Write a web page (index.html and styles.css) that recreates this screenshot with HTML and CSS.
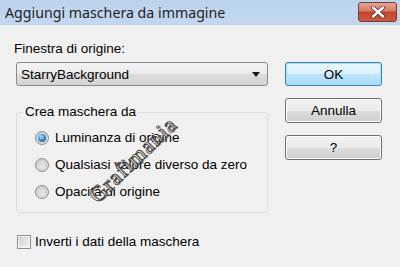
FILE: index.html
```html
<!DOCTYPE html>
<html lang="it">
<head>
    <meta charset="UTF-8">
    <title>Aggiungi maschera da immagine</title>
    <link rel="stylesheet" href="styles.css">
</head>
<body>
<div class="window">
    <div class="titlebar">
        <span class="title">Aggiungi maschera da immagine</span>
        <span class="close">
            <svg width="20" height="12" viewBox="0 0 20 12">
                <path d="M5 1.5 L15 10.5 M15 1.5 L5 10.5" stroke="#5a2a22" stroke-width="4" stroke-linecap="round"/>
                <path d="M5 1.5 L15 10.5 M15 1.5 L5 10.5" stroke="#fff" stroke-width="2.4" stroke-linecap="round"/>
            </svg>
        </span>
    </div>
    <div class="content">
        <div class="main_left">
            <p class="label">Finestra di origine:</p>
            <div class="select">
                <span>StarryBackground</span>
                <span class="arrow"></span>
            </div>
            <fieldset class="group">
                <legend>Crea maschera da</legend>
                <div class="option"><span class="radio checked"></span>Luminanza di origine</div>
                <div class="option"><span class="radio"></span>Qualsiasi valore diverso da zero</div>
                <div class="option"><span class="radio"></span>Opacità di origine</div>
            </fieldset>
            <div class="option check_row"><span class="checkbox"></span>Inverti i dati della maschera</div>
        </div>
        <div class="main_right">
            <div class="btn default">OK</div>
            <div class="btn">Annulla</div>
            <div class="btn">?</div>
        </div>
    </div>
    <div class="watermark">Grafimania</div>
</div>
</body>
</html>
```

FILE: styles.css
```css
*{margin: 0;padding: 0;box-sizing: border-box}
body{
    width: 400px;
    height: 267px;
    overflow: hidden;
    background: #f0f0f0;
    font-family: "Liberation Sans", Arial, sans-serif;
    font-size: 13.5px;
    color: #000;
}
.window{
    position: relative;
    width: 400px;
    height: 267px;
}
.titlebar{
    height: 25px;
    background: linear-gradient(#bcd3ec, #c3d8ef);
    display: flex;
    align-items: center;
    justify-content: space-between;
    padding: 0 3px 0 5px;
}
.title{
    font-family: "Noto Sans", sans-serif;
    font-size: 14.2px;
    color: #1e1e1e;
    margin-top: -1px;
}
.close{
    width: 39px;
    height: 20px;
    margin-top: -2px;
    border: 1px solid #7a3a30;
    border-radius: 3px;
    background: linear-gradient(#e4a295 0%, #d77a68 45%, #c1432d 50%, #cc5a42 100%);
    display: flex;
    align-items: center;
    justify-content: center;
}
.content{
    display: flex;
    padding: 15px 0 0 16px;
}
.main_left{
    width: 252px;
}
.label{
    margin-left: -2px;
    height: 16px;
    line-height: 16px;
    margin-top: 1px;
}
.select{
    margin-top: 5px;
    height: 24px;
    border: 1px solid #8a8a8a;
    border-radius: 3px;
    background: linear-gradient(#f3f3f3 0%, #ebebeb 50%, #dddddd 51%, #d3d3d3 100%);
    display: flex;
    align-items: center;
    justify-content: space-between;
    padding: 0 7px 0 4px;
}
.arrow{
    width: 0;
    height: 0;
    border-left: 4px solid transparent;
    border-right: 4px solid transparent;
    border-top: 5px solid #1a1a1a;
}
.group{
    margin-top: 18px;
    height: 109px;
    border: 1px solid #d5dfe5;
    border-radius: 3px;
    padding: 4px 0 0 18px;
}
.group legend{
    margin-left: -12px;
    padding: 0 2px;
    line-height: 16px;
}
.option{
    display: flex;
    align-items: center;
    height: 27px;
    white-space: nowrap;
}
.radio{
    width: 14px;
    height: 14px;
    border-radius: 50%;
    border: 1px solid #8e8f8f;
    background: radial-gradient(circle at 50% 60%, #e8e8e8, #cfcfcf 70%, #bdbdbd);
    margin-right: 6px;
    position: relative;
}
.radio.checked::after{
    content: "";
    position: absolute;
    left: 2px;
    top: 2px;
    width: 8px;
    height: 8px;
    border-radius: 50%;
    background: radial-gradient(circle at 40% 35%, #a9e3fb, #2a7cc0 60%, #12426f);
}
.check_row{
    margin-top: 15px;
    margin-left: 1px;
}
.checkbox{
    width: 14px;
    height: 14px;
    border: 1px solid #8e8f8f;
    background: linear-gradient(135deg, #cfcfcf, #f4f4f4);
    box-shadow: inset 0 0 0 1px #f4f4f4;
    margin-right: 4px;
}
.main_right{
    margin-left: 17px;
    width: 97px;
    display: flex;
    flex-direction: column;
    gap: 12px;
    padding-top: 22px;
}
.btn{
    height: 25px;
    border: 1px solid #707070;
    border-radius: 3px;
    background: linear-gradient(#f2f2f2 0%, #ebebeb 50%, #dddddd 51%, #cfcfcf 100%);
    box-shadow: inset 0 0 0 1px #fcfcfc;
    display: flex;
    align-items: center;
    justify-content: center;
}
.btn.default{
    height: 24px;
    border-color: #3c7fb1;
    background: linear-gradient(#eaf6fd 0%, #d9f0fc 50%, #bee6fd 51%, #a7d9f5 100%);
    box-shadow: inset 0 0 0 1px #a6e1f7;
}
.watermark{
    position: absolute;
    left: 73px;
    top: 148px;
    width: 120px;
    line-height: 24px;
    text-align: center;
    transform: rotate(-44deg);
    font-family: "Liberation Serif", serif;
    font-size: 22px;
    letter-spacing: 1.2px;
    color: #fff;
    -webkit-text-stroke: 0.8px #333;
    text-shadow: 1px 1px 1px #666;
}
```
